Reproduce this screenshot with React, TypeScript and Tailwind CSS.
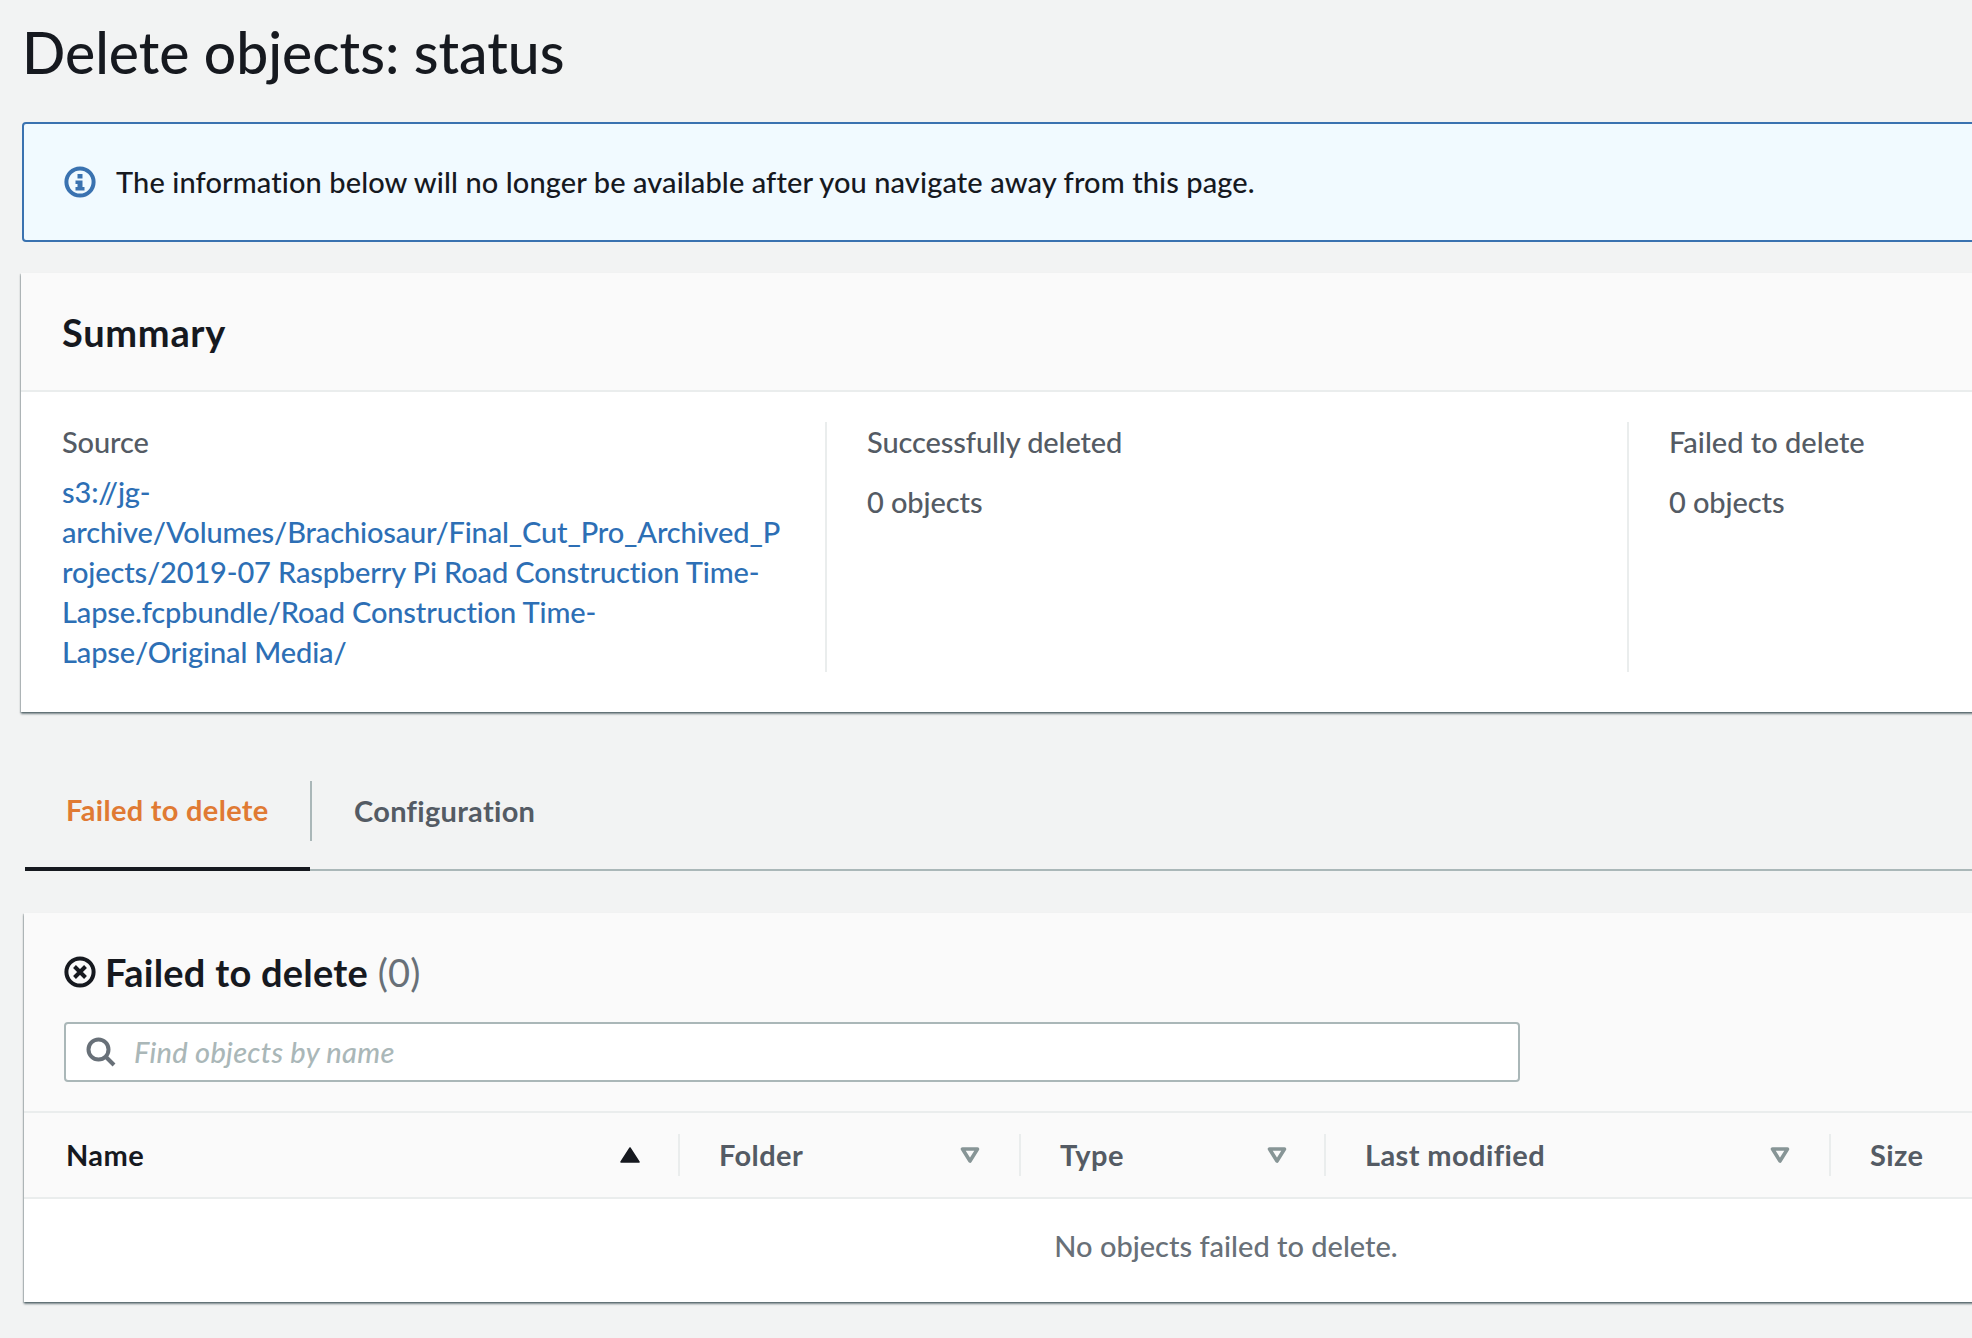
import React from "react";

const font = "font-['Lato','Noto_Sans',sans-serif]";

const sourceLines = [
  "s3://jg-",
  "archive/Volumes/Brachiosaur/Final_Cut_Pro_Archived_P",
  "rojects/2019-07 Raspberry Pi Road Construction Time-",
  "Lapse.fcpbundle/Road Construction Time-",
  "Lapse/Original Media/",
];

const columns = [
  { label: "Folder", width: "w-[341px] pr-[39px]" },
  { label: "Type", width: "w-[305px] pr-[37px]" },
  { label: "Last modified", width: "w-[505px] pr-[39px]" },
];

function InfoIcon() {
  return (
    <svg viewBox="0 0 32 32" className="h-8 w-8 shrink-0">
      <circle cx="16" cy="16" r="13.6" fill="none" stroke="#3a72b0" strokeWidth="4" />
      <rect x="13.5" y="8" width="5" height="4.5" fill="#3a72b0" />
      <path d="M11.5 14.5h7v6.5h2v3.5h-9v-3.5h2v-3h-2z" fill="#3a72b0" />
    </svg>
  );
}

function FailedIcon() {
  return (
    <svg viewBox="0 0 32 32" className="h-8 w-8 shrink-0">
      <circle cx="16" cy="16" r="13.6" fill="none" stroke="#16191f" strokeWidth="4" />
      <path d="M10.5 10.5l11 11M21.5 10.5l-11 11" stroke="#16191f" strokeWidth="4" fill="none" />
    </svg>
  );
}

function SearchIcon() {
  return (
    <svg viewBox="0 0 30 30" className="h-[30px] w-[30px] shrink-0">
      <circle cx="12.5" cy="12.5" r="10" fill="none" stroke="#687078" strokeWidth="4" />
      <path d="M19.5 19.5l8.5 8.5" stroke="#687078" strokeWidth="4" fill="none" />
    </svg>
  );
}

function SortUp() {
  return (
    <svg viewBox="0 0 20 16" className="h-4 w-5 shrink-0">
      <path d="M10 1L19 15H1z" fill="#16191f" stroke="#16191f" strokeWidth="1.5" strokeLinejoin="round" />
    </svg>
  );
}

function SortDown() {
  return (
    <svg viewBox="0 0 20 16" className="h-4 w-5 shrink-0">
      <path d="M2.5 2h15L10 14z" fill="none" stroke="#879596" strokeWidth="3.6" strokeLinejoin="round" />
    </svg>
  );
}

function Divider() {
  return <div className="h-[42px] w-[2px] shrink-0 bg-[#eaeded]" />;
}

export default function App() {
  return (
    <div className={`h-[1338px] w-full overflow-hidden bg-[#f2f3f3] pl-[21px] text-[29px] font-medium leading-[40px] text-[#16191f] ${font}`}>
      <div className="w-[2500px]">
        <h1 className="flex h-[104px] items-center pl-[1px] text-[57px] leading-[72px]">Delete objects: status</h1>

        <div className="ml-[1px] mt-[18px] flex h-[120px] items-center gap-[20px] rounded-[4px] border-2 border-[#3a72b0] bg-[#f1faff] pl-[40px]">
          <InfoIcon />
          <span className="tracking-[0.1px]">
            The information below will no longer be available after you navigate away from this page.
          </span>
        </div>

        <section className="mt-[31px] bg-white shadow-[0_2px_2px_0_rgba(0,28,36,0.5),1px_1px_1px_0_rgba(0,28,36,0.1),-1px_1px_1px_0_rgba(0,28,36,0.15)]">
          <div className="flex h-[119px] items-center border-b-2 border-[#eaeded] bg-[#fafafa] pl-[41px]">
            <h2 className="text-[38px] font-bold tracking-[0.7px]">Summary</h2>
          </div>
          <div className="flex h-[320px] items-start pl-[41px] pt-[30px] tracking-[-0.1px] text-[#545b64]">
            <div className="h-[250px] w-[765px] shrink-0 border-r-2 border-[#eaeded]">
              <div>Source</div>
              <div className="mt-[10px] tracking-[-0.14px] text-[#2d6fb5]">
                {sourceLines.map((line) => (
                  <div key={line}>{line}</div>
                ))}
              </div>
            </div>
            <div className="h-[250px] w-[802px] shrink-0 border-r-2 border-[#eaeded] pl-[40px]">
              <div>Successfully deleted</div>
              <div className="mt-[20px]">0 objects</div>
            </div>
            <div className="pl-[40px]">
              <div className="tracking-[0px]">Failed to delete</div>
              <div className="mt-[20px]">0 objects</div>
            </div>
          </div>
        </section>

        <div className="ml-[4px] mt-[41px] flex h-[118px] items-center border-b-2 border-[#aab7b8] font-bold tracking-[0.3px]">
          <div className="-mb-[2px] flex h-[118px] w-[285px] items-center border-b-4 border-[#16191f] pl-[41px] text-[#e07a33]">
            Failed to delete
          </div>
          <div className="h-[60px] w-[2px] bg-[#aab7b8]" />
          <div className="pl-[42px] text-[#545b64]">Configuration</div>
        </div>

        <section className="ml-[3px] mt-[42px] w-[2404px] bg-white shadow-[0_2px_2px_0_rgba(0,28,36,0.5),1px_1px_1px_0_rgba(0,28,36,0.1),-1px_1px_1px_0_rgba(0,28,36,0.15)]">
          <div className="h-[200px] border-b-2 border-[#eaeded] bg-[#fafafa] pl-[40px] pt-[43px]">
            <div className="flex h-[32px] items-center gap-[9px] text-[38px] font-bold tracking-[0.25px]">
              <FailedIcon />
              <h2>
                Failed to delete <span className="font-normal text-[#687078]">(0)</span>
              </h2>
            </div>
            <div className="mt-[34px] flex h-[60px] w-[1456px] items-center gap-[18px] rounded-[4px] border-2 border-[#aab7b8] bg-white pl-[20px]">
              <SearchIcon />
              <span className="italic tracking-[0.3px] text-[#aab7b8]">Find objects by name</span>
            </div>
          </div>
          <div className="flex h-[86px] items-center border-b-2 border-[#eaeded] bg-[#fafafa] font-bold tracking-[0.4px] text-[#545b64]">
            <div className="flex w-[654px] shrink-0 items-center pl-[42px] pr-[38px] text-[#16191f]">
              <span className="flex-1">Name</span>
              <SortUp />
            </div>
            {columns.map((col) => (
              <div key={col.label} className={`flex shrink-0 items-center ${col.width}`}>
                <Divider />
                <span className="flex-1 pl-[39px]">{col.label}</span>
                <SortDown />
              </div>
            ))}
            <div className="flex items-center">
              <Divider />
              <span className="pl-[39px]">Size</span>
            </div>
          </div>
          <div className="flex h-[103px] items-center justify-center pb-[10px] text-[#687078]">
            No objects failed to delete.
          </div>
        </section>
      </div>
    </div>
  );
}
